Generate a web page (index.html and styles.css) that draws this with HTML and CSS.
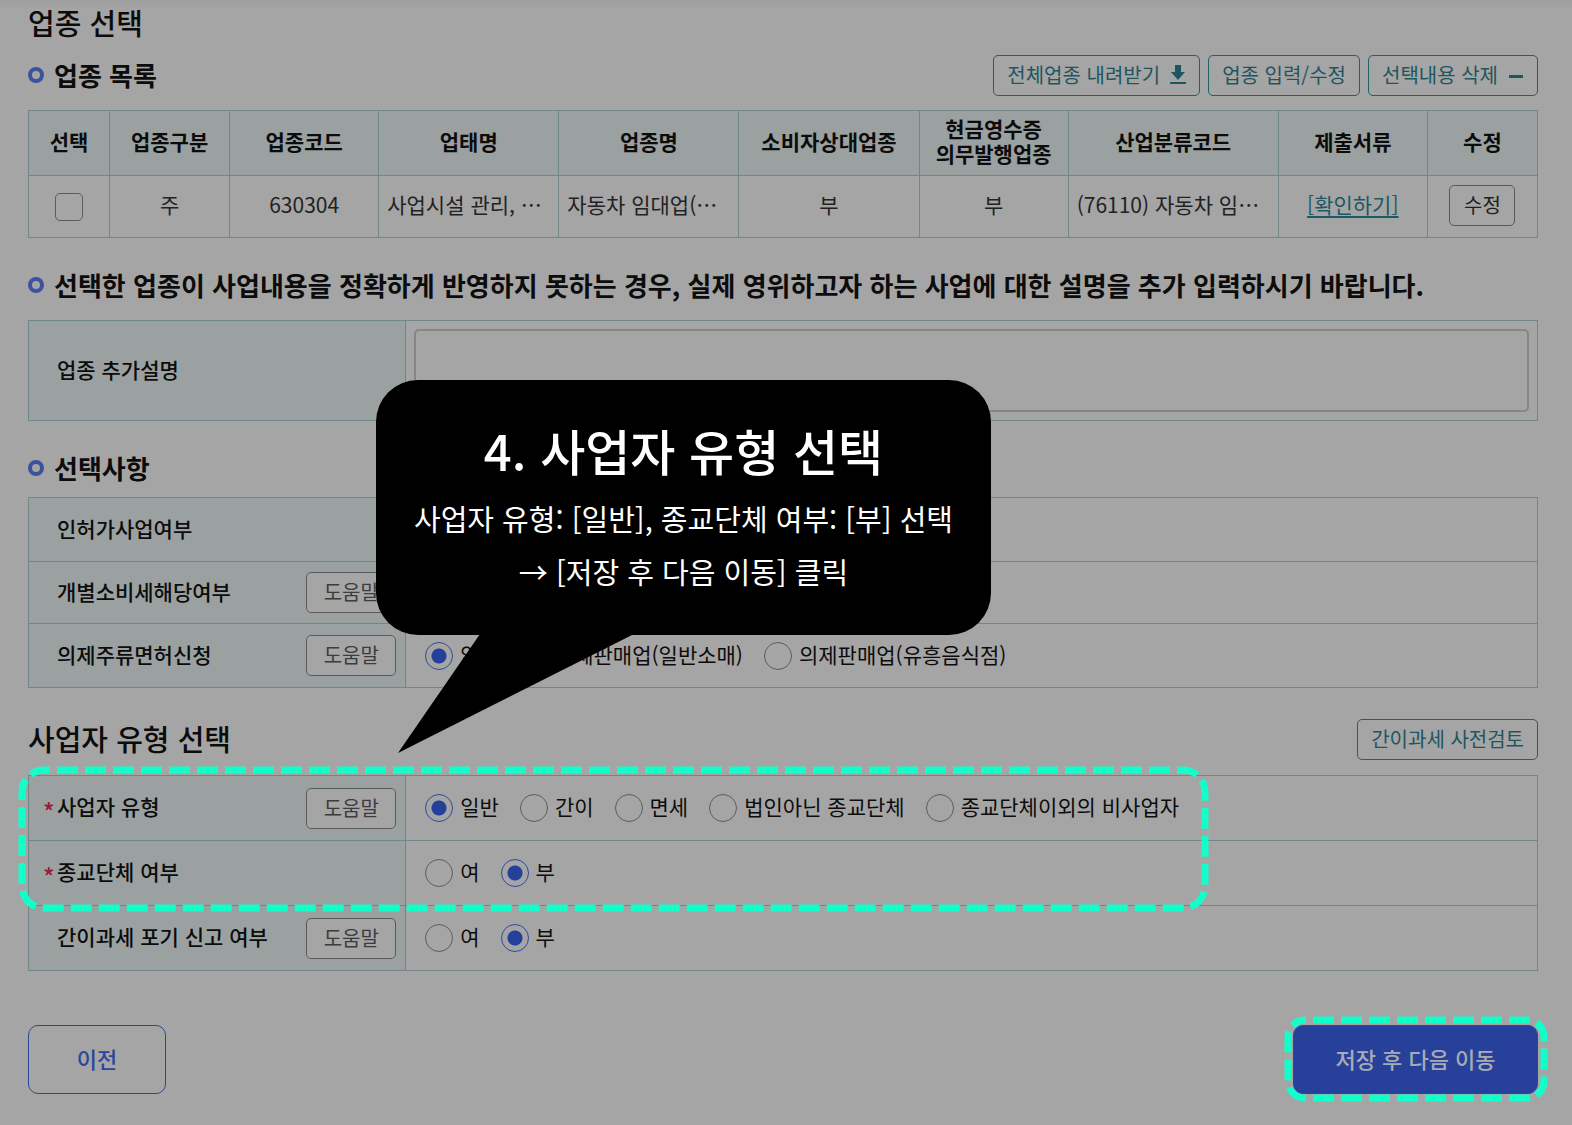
FILE: index.html
```html
<!DOCTYPE html>
<html lang="ko">
<head>
<meta charset="utf-8">
<meta name="viewport" content="width=device-width, initial-scale=1">
<title>업종 선택</title>
<link rel="stylesheet" href="styles.css">
</head>
<body>
<main class="page">
  <h1 class="title">업종 선택</h1>

  <section>
    <div class="section-head">
      <h2 class="subtitle">업종 목록</h2>
      <div class="actions">
        <button type="button" class="btn btn-teal">전체업종 내려받기
          <svg class="icon" viewBox="0 0 16 20" aria-hidden="true"><path d="M5 0h6v7h4L8 15 1 7h4zM0 17h16v2H0z"/></svg>
        </button>
        <button type="button" class="btn btn-teal">업종 입력/수정</button>
        <button type="button" class="btn btn-teal">선택내용 삭제
          <svg class="icon" viewBox="0 0 16 20" aria-hidden="true"><path d="M1 10h14v3H1z"/></svg>
        </button>
      </div>
    </div>
    <table class="grid list">
      <colgroup>
        <col class="w-check"><col class="w-kind"><col class="w-mid"><col class="w-wide"><col class="w-wide"><col class="w-wide"><col class="w-mid"><col class="w-code"><col class="w-mid"><col class="w-edit">
      </colgroup>
      <thead>
        <tr><th>선택</th><th>업종구분</th><th>업종코드</th><th>업태명</th><th>업종명</th><th>소비자상대업종</th><th>현금영수증<br>의무발행업종</th><th>산업분류코드</th><th>제출서류</th><th>수정</th></tr>
      </thead>
      <tbody>
        <tr>
          <td><input type="checkbox" class="check" aria-label="선택"></td>
          <td>주</td>
          <td>630304</td>
          <td class="left">사업시설 관리, …</td>
          <td class="left">자동차 임대업(…</td>
          <td>부</td>
          <td>부</td>
          <td class="left">(76110) 자동차 임…</td>
          <td><a href="#" class="link">[확인하기]</a></td>
          <td><button type="button" class="btn btn-gray btn-edit">수정</button></td>
        </tr>
      </tbody>
    </table>
  </section>

  <section class="block">
    <div class="section-head">
      <h2 class="subtitle">선택한 업종이 사업내용을 정확하게 반영하지 못하는 경우, 실제 영위하고자 하는 사업에 대한 설명을 추가 입력하시기 바랍니다.</h2>
    </div>
    <table class="grid form">
      <tbody>
        <tr>
          <th><div class="label-row"><label class="name" for="desc">업종 추가설명</label></div></th>
          <td class="area-cell"><textarea id="desc" class="area"></textarea></td>
        </tr>
      </tbody>
    </table>
  </section>

  <section class="block tight">
    <div class="section-head">
      <h2 class="subtitle">선택사항</h2>
    </div>
    <table class="grid form">
      <tbody>
        <tr>
          <th><div class="label-row"><span class="name">인허가사업여부</span></div></th>
          <td></td>
        </tr>
        <tr class="short">
          <th><div class="label-row"><span class="name">개별소비세해당여부</span><button type="button" class="btn btn-gray btn-help">도움말</button></div></th>
          <td></td>
        </tr>
        <tr>
          <th><div class="label-row"><span class="name">의제주류면허신청</span><button type="button" class="btn btn-gray btn-help">도움말</button></div></th>
          <td>
            <div class="radios">
              <label class="option"><input type="radio" name="liquor" class="radio" checked><span class="option-text">없음</span></label>
              <label class="option"><input type="radio" name="liquor" class="radio"><span class="option-text">의제판매업(일반소매)</span></label>
              <label class="option"><input type="radio" name="liquor" class="radio"><span class="option-text">의제판매업(유흥음식점)</span></label>
            </div>
          </td>
        </tr>
      </tbody>
    </table>
  </section>

  <section class="block type">
    <div class="section-head">
      <h2 class="title">사업자 유형 선택</h2>
      <div class="actions">
        <button type="button" class="btn btn-teal">간이과세 사전검토</button>
      </div>
    </div>
    <table class="grid form">
      <tbody>
        <tr>
          <th><div class="label-row"><span class="star">*</span><span class="name">사업자 유형</span><button type="button" class="btn btn-gray btn-help">도움말</button></div></th>
          <td>
            <div class="radios">
              <label class="option"><input type="radio" name="type" class="radio" checked><span class="option-text">일반</span></label>
              <label class="option"><input type="radio" name="type" class="radio"><span class="option-text">간이</span></label>
              <label class="option"><input type="radio" name="type" class="radio"><span class="option-text">면세</span></label>
              <label class="option"><input type="radio" name="type" class="radio"><span class="option-text">법인아닌 종교단체</span></label>
              <label class="option"><input type="radio" name="type" class="radio"><span class="option-text">종교단체이외의 비사업자</span></label>
            </div>
          </td>
        </tr>
        <tr>
          <th><div class="label-row"><span class="star">*</span><span class="name">종교단체 여부</span></div></th>
          <td>
            <div class="radios">
              <label class="option"><input type="radio" name="religion" class="radio"><span class="option-text">여</span></label>
              <label class="option"><input type="radio" name="religion" class="radio" checked><span class="option-text">부</span></label>
            </div>
          </td>
        </tr>
        <tr>
          <th><div class="label-row"><span class="name">간이과세 포기 신고 여부</span><button type="button" class="btn btn-gray btn-help">도움말</button></div></th>
          <td>
            <div class="radios">
              <label class="option"><input type="radio" name="waive" class="radio"><span class="option-text">여</span></label>
              <label class="option"><input type="radio" name="waive" class="radio" checked><span class="option-text">부</span></label>
            </div>
          </td>
        </tr>
      </tbody>
    </table>

    <svg class="dash dash-type" aria-hidden="true"><rect class="dash-line dash-line-type" x="4" y="4" rx="22"/></svg>

    <div class="callout">
      <strong class="callout-title">4. 사업자 유형 선택</strong>
      <p class="callout-text">사업자 유형: [일반], 종교단체 여부: [부] 선택<br>→ [저장 후 다음 이동] 클릭</p>
      <svg class="tail" viewBox="0 0 236 120" aria-hidden="true"><path d="M82 0H236L0 119z"/></svg>
    </div>
  </section>

  <footer class="footer">
    <button type="button" class="nav prev">이전</button>
    <div class="next-wrap">
      <button type="button" class="nav next">저장 후 다음 이동</button>
      <svg class="dash dash-next" aria-hidden="true"><rect class="dash-line dash-line-next" x="4" y="4" rx="17"/></svg>
    </div>
  </footer>
</main>
</body>
</html>
```
FILE: styles.css
```css
*,
*::before {
  box-sizing: border-box;
}

body {
  margin: 0;
  background: #a5a5a5 linear-gradient(#9e9e9e, #a5a5a5) no-repeat 0 0 / 100% 10px;
  color: #0c0c0c;
  font-family: "Noto Sans CJK KR", sans-serif;
  font-size: 21px;
  line-height: 25px;
}

button,
textarea {
  font-family: inherit;
}

.page {
  padding: 2px 34px 31px 28px;
}

.title,
.subtitle {
  margin: 0;
  font-weight: 700;
}

.title {
  padding-bottom: 3px;
  font-size: 29px;
  font-weight: 500;
  line-height: 40px;
}

.subtitle {
  display: flex;
  align-items: center;
  gap: 10px;
  padding-bottom: 2px;
  font-size: 26px;
  line-height: 40px;
}

.subtitle::before {
  content: "";
  width: 16px;
  height: 16px;
  border: 4px solid #3a529f;
  border-radius: 50%;
}

h1.title {
  margin-bottom: 10px;
}

.block {
  margin-top: 27px;
}

.section-head {
  display: flex;
  align-items: center;
  justify-content: space-between;
  height: 41px;
  margin-bottom: 14px;
}

.tight .section-head {
  margin-bottom: 8px;
}

.type {
  position: relative;
  margin-top: 31px;
}

.type .section-head {
  margin-bottom: 15px;
}

.actions {
  display: flex;
  gap: 8px;
}

.btn {
  display: inline-flex;
  align-items: center;
  justify-content: center;
  height: 41px;
  padding: 0 0 2px;
  border: 1px solid;
  border-radius: 5px;
  background: #a5a5a5;
  font-size: 20px;
  line-height: 25px;
  white-space: nowrap;
}

.btn-teal {
  gap: 10px;
  padding: 0 13px 2px;
  border-color: #22606b;
  color: #1f5560;
}

.btn-gray {
  border-color: #5a5a5a;
  color: #3c3c3c;
}

.btn-help {
  width: 90px;
}

.btn-edit {
  width: 66px;
  margin-top: 2px;
  color: #202020;
}

.icon {
  width: 16px;
  height: 20px;
  fill: #1c5660;
}

.grid {
  width: 100%;
  border-collapse: collapse;
  table-layout: fixed;
}

.grid th,
.grid td {
  padding: 0;
  border: 1px solid #708789;
}

.grid th {
  background: #9aa1a0;
  font-weight: 500;
}

.grid.list th {
  height: 65px;
  padding-bottom: 4px;
  font-weight: 700;
}

.grid.list td {
  height: 62px;
  padding-bottom: 4px;
  color: #222222;
  text-align: center;
  vertical-align: middle;
}

.grid.list .left {
  padding-left: 8px;
  text-align: left;
  white-space: nowrap;
  overflow: hidden;
}

.w-check { width: 81px; }
.w-kind { width: 120px; }
.w-mid { width: 149px; }
.w-wide { width: 180px; }
.w-code { width: 210px; }
.w-edit { width: 110px; }

.link {
  color: #1d5964;
  text-underline-offset: 3px;
}

.check {
  appearance: none;
  display: block;
  width: 28px;
  height: 28px;
  margin: 5px auto 0;
  border: 1px solid #5c5c5c;
  border-radius: 5px;
}

.form th {
  width: 25%;
  height: 64px;
  text-align: left;
}

.form .short th {
  height: 62px;
}

.type .form th {
  height: 65px;
}

.label-row {
  display: flex;
  align-items: center;
  padding: 0 9px 0 14px;
}

.name {
  flex: 1;
  padding-bottom: 3px;
}

.name:first-child {
  padding-left: 14px;
}

.star {
  width: 14px;
  padding-top: 5px;
  color: #9c1a3a;
  font-size: 24px;
}

.form .area-cell {
  padding: 8px;
}

.area {
  display: block;
  width: 100%;
  height: 83px;
  border: 2px solid #868686;
  border-radius: 5px;
  background: #a5a5a5;
  resize: none;
}

.radios {
  display: flex;
  gap: 21px;
  padding-left: 19px;
}

.option {
  display: flex;
  align-items: center;
  gap: 7px;
  white-space: nowrap;
}

.option-text {
  padding-bottom: 3px;
}

.radio {
  appearance: none;
  width: 28px;
  height: 28px;
  margin: 0;
  border: 1px solid #5c5c5c;
  border-radius: 50%;
}

.radio:checked {
  border-color: #304a9e;
  background: radial-gradient(circle, #25409a 7px, transparent 8px);
}

.footer {
  display: flex;
  justify-content: space-between;
  margin-top: 54px;
}

.nav {
  height: 69px;
  padding: 0 0 4px;
  border: 1px solid #2c459c;
  border-radius: 10px;
  font-size: 22px;
  font-weight: 500;
  line-height: 30px;
}

.prev {
  width: 138px;
  background: #a5a5a5;
  color: #2c459c;
}

.next {
  width: 245px;
  background: #27419a;
  color: #a9abb3;
}

.next-wrap {
  position: relative;
}

.dash {
  position: absolute;
  pointer-events: none;
}

.dash-line {
  fill: none;
  stroke: #12ffca;
  stroke-width: 7px;
  stroke-dasharray: 21 7;
}

.dash-type {
  left: -10px;
  top: 47px;
  width: 1191px;
  height: 146px;
}

.dash-line-type {
  width: 1183px;
  height: 138px;
  stroke-dashoffset: 15px;
}

.dash-next {
  top: -9px;
  left: -9px;
  width: 264px;
  height: 86px;
}

.dash-line-next {
  width: 256px;
  height: 78px;
  stroke-dashoffset: 20px;
}

.callout {
  position: absolute;
  left: 348px;
  top: -339px;
  width: 615px;
  height: 255px;
  padding-top: 40px;
  border-radius: 42px;
  background: #000000;
  color: #ffffff;
  text-align: center;
}

.callout-title {
  display: block;
  font-size: 49px;
  font-weight: 500;
  line-height: 60px;
}

.callout-text {
  margin: 12px 0 0;
  font-size: 29px;
  line-height: 53px;
  white-space: nowrap;
}

.tail {
  position: absolute;
  top: 254px;
  left: 22px;
  width: 236px;
  height: 120px;
}
```
